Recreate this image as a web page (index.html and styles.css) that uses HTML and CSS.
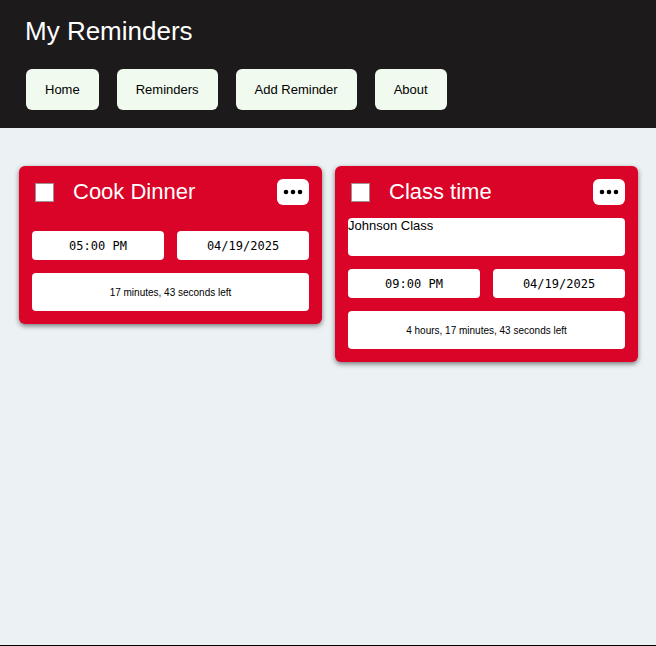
FILE: index.html
```html
<!DOCTYPE html>
<html lang="en">
<head>
<meta charset="utf-8">
<meta name="viewport" content="width=device-width, initial-scale=1">
<title>My Reminders</title>
<link rel="stylesheet" href="styles.css">
</head>
<body>
<header class="site-header">
  <h1 class="site-title">My Reminders</h1>
  <nav class="site-nav">
    <a class="nav-link" href="#home">Home</a>
    <a class="nav-link" href="#reminders">Reminders</a>
    <a class="nav-link" href="#add">Add Reminder</a>
    <a class="nav-link" href="#about">About</a>
  </nav>
</header>
<main class="reminders">
  <article class="card">
    <div class="card-header">
      <input class="card-check" type="checkbox" id="done-1">
      <label class="card-title" for="done-1">Cook Dinner</label>
      <button class="card-menu" type="button" aria-label="Options">
        <svg class="dots" viewBox="0 0 20 6" aria-hidden="true"><circle cx="3" cy="3" r="2.3"/><circle cx="10" cy="3" r="2.3"/><circle cx="17" cy="3" r="2.3"/></svg>
      </button>
    </div>
    <div class="card-note"></div>
    <div class="card-when">
      <input class="when-field" type="text" value="05:00 PM" aria-label="Time" readonly>
      <input class="when-field" type="text" value="04/19/2025" aria-label="Date" readonly>
    </div>
    <p class="card-left">17 minutes, 43 seconds left</p>
  </article>
  <article class="card">
    <div class="card-header">
      <input class="card-check" type="checkbox" id="done-2">
      <label class="card-title" for="done-2">Class time</label>
      <button class="card-menu" type="button" aria-label="Options">
        <svg class="dots" viewBox="0 0 20 6" aria-hidden="true"><circle cx="3" cy="3" r="2.3"/><circle cx="10" cy="3" r="2.3"/><circle cx="17" cy="3" r="2.3"/></svg>
      </button>
    </div>
    <textarea class="card-note card-note-filled" aria-label="Description" readonly>Johnson Class</textarea>
    <div class="card-when">
      <input class="when-field" type="text" value="09:00 PM" aria-label="Time" readonly>
      <input class="when-field" type="text" value="04/19/2025" aria-label="Date" readonly>
    </div>
    <p class="card-left">4 hours, 17 minutes, 43 seconds left</p>
  </article>
</main>
<footer class="site-footer"></footer>
</body>
</html>
```
FILE: styles.css
```css
* {
  box-sizing: border-box;
}

body {
  display: flex;
  flex-direction: column;
  min-height: 100vh;
  margin: 0;
  background: #ecf1f4;
  color: #000;
  font: 13px/15px "Liberation Sans", Arial, sans-serif;
}

.site-header {
  padding: 16px 25px 18px;
  background: #1c1a1b;
}

.site-title {
  margin: 0 0 23px;
  color: #fff;
  font-size: 26px;
  font-weight: 400;
  line-height: 30px;
}

.site-nav {
  display: flex;
  flex-wrap: wrap;
  gap: 18px;
  padding-left: 1px;
}

.nav-link {
  padding: 13px 19px;
  border-radius: 6px;
  background: #f0faee;
  color: #000;
  text-decoration: none;
}

.reminders {
  display: grid;
  flex: 1;
  grid-template-columns: repeat(auto-fill, minmax(280px, 1fr));
  align-items: start;
  align-content: start;
  gap: 13px;
  padding: 38px 18px 38px 19px;
}

.card {
  display: flex;
  flex-direction: column;
  gap: 13px;
  padding: 13px;
  border-radius: 6px;
  background: #da0428;
  box-shadow: 0 2px 5px rgba(0, 0, 0, 0.5);
}

.card-header {
  display: flex;
  align-items: center;
  height: 26px;
}

.card-check {
  width: 19px;
  height: 19px;
  margin: 0 19px 0 3px;
  border: 1px solid #a09090;
  background: #fff;
  appearance: none;
}

.card-check:checked {
  background: #333;
}

.card-title {
  flex: 1;
  color: #fff;
  font-size: 22px;
  line-height: 26px;
}

.card-menu {
  display: flex;
  align-items: center;
  justify-content: center;
  width: 32px;
  height: 26px;
  padding: 0;
  border: 0;
  border-radius: 6px;
  background: #fff;
}

.dots {
  width: 20px;
  height: 6px;
}

.card-note-filled {
  display: block;
  height: 38px;
  padding: 0;
  border: 0;
  border-radius: 4px;
  background: #fff;
  font: inherit;
  resize: none;
}

.card-when {
  display: grid;
  grid-template-columns: 1fr 1fr;
  gap: 13px;
}

.when-field {
  width: 100%;
  height: 29px;
  padding: 0;
  border: 0;
  border-radius: 4px;
  background: #fff;
  font: 12px "DejaVu Sans Mono", monospace;
  text-align: center;
}

.card-left {
  margin: 0;
  padding: 13px 12px 11px;
  border-radius: 4px;
  background: #fff;
  font-size: 10px;
  line-height: 14px;
  text-align: center;
}

.site-footer {
  border-top: 1px solid #000;
}
```
